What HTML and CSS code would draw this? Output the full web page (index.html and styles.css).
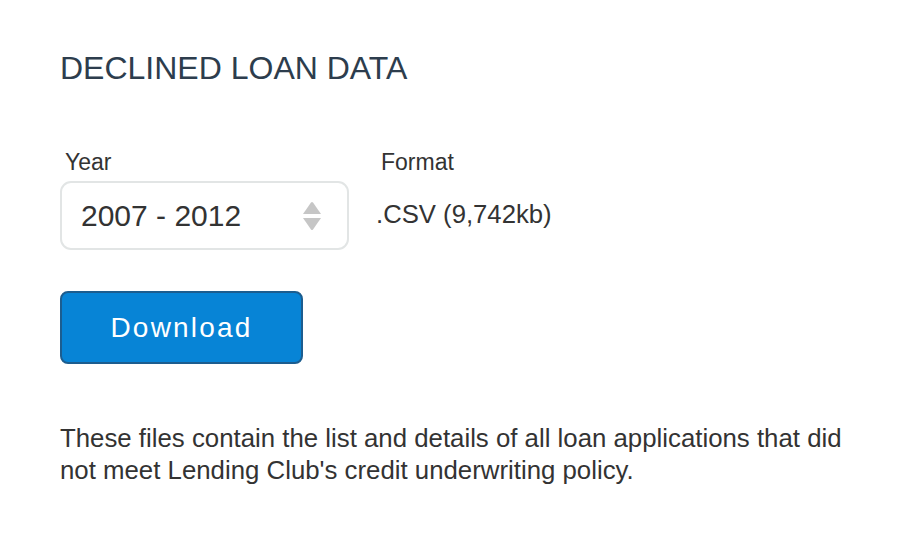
FILE: index.html
```html
<!DOCTYPE html>
<html>
<head>
<meta charset="utf-8">
<link rel="stylesheet" href="styles.css">
</head>
<body>
<main class="panel">
  <h1 class="title">DECLINED LOAN DATA</h1>
  <div class="fields">
    <div class="field field-year">
      <div class="label">Year</div>
      <div class="select">
        <span class="select-value">2007 - 2012</span>
        <svg class="arrows" width="18" height="30" viewBox="0 0 18 30">
          <path d="M8 1.5 Q9 0.5 10 1.5 L18 13 L0 13 Z" fill="#c6c6c6"/>
          <path d="M0 17 L18 17 L10 28.5 Q9 29.5 8 28.5 Z" fill="#c6c6c6"/>
        </svg>
      </div>
    </div>
    <div class="field field-format">
      <div class="label">Format</div>
      <div class="format-value">.CSV (9,742kb)</div>
    </div>
  </div>
  <button class="btn">Download</button>
  <p class="desc">These files contain the list and details of all loan applications that did not meet Lending Club's credit underwriting policy.</p>
</main>
</body>
</html>
```
FILE: styles.css
```css
html, body {
  margin: 0;
  padding: 0;
  background: #ffffff;
}
body {
  font-family: "Liberation Sans", Arial, sans-serif;
  color: #333333;
}
.panel {
  padding: 48px 0 0 60px;
  width: 800px;
}
.title {
  margin: 0;
  font-size: 32px;
  font-weight: 400;
  line-height: 40px;
  color: #2d3d4d;
}
.fields {
  display: flex;
  margin-top: 61px;
}
.field-year {
  width: 316px;
}
.label {
  font-size: 23px;
  line-height: 26px;
  padding-left: 5px;
  color: #333;
}
.select {
  margin-top: 6px;
  width: 289px;
  height: 69px;
  box-sizing: border-box;
  border: 2px solid #e2e5e5;
  border-radius: 11px;
  display: flex;
  align-items: center;
  justify-content: space-between;
  padding: 0 26px 0 19px;
}
.select-value {
  font-size: 30px;
  color: #333;
}
.arrows {
  display: block;
}
.format-value {
  font-size: 25.7px;
  margin-top: 25px;
  color: #333;
}
.btn {
  display: block;
  margin-top: 41px;
  width: 243px;
  height: 73px;
  background: #0784d6;
  border: 2px solid #1c5d8f;
  border-radius: 8px;
  color: #ffffff;
  font-family: "Liberation Sans", Arial, sans-serif;
  font-size: 28px;
  letter-spacing: 2.2px;
  padding: 0 0 0 0;
}
.desc {
  margin: 58px 0 0 0;
  font-size: 25.8px;
  line-height: 32px;
  color: #333;
}
```
